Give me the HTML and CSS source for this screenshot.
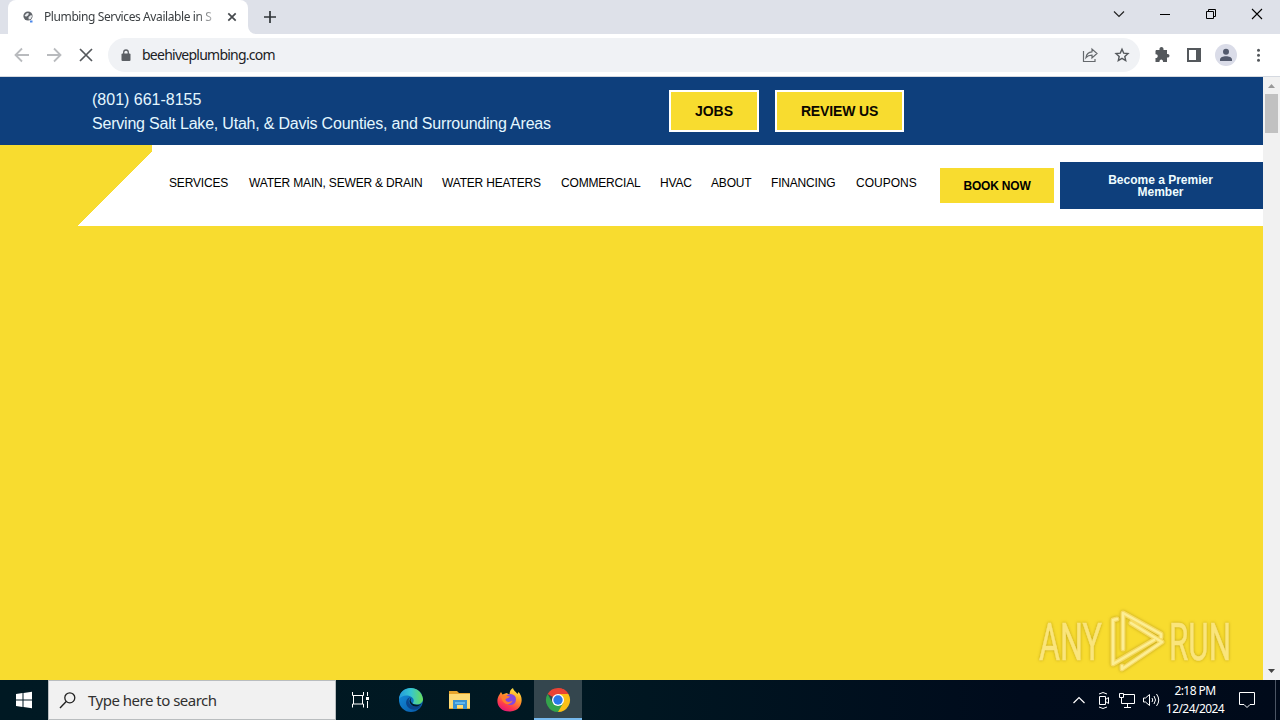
FILE: index.html
```html
<!DOCTYPE html>
<html lang="en">
<head>
<meta charset="utf-8">
<title>Plumbing Services Available in Salt Lake</title>
<link rel="stylesheet" href="styles.css">
</head>
<body>
<div class="screen">
  <header class="tabstrip">
    <div class="tab">
      <svg class="favicon" width="14" height="14" viewBox="0 0 14 14"><circle cx="6" cy="6" r="4.600" fill="#5f6368"/><path d="M2.500 5.500 5 3l2 .5-1 2-2 1.200zM6.500 7l2.500-2 1.200 1-1.500 3-2 .5z" fill="#e8eaed"/><path d="M8 11.500h2.500" stroke="#4a86e8" stroke-width="2"/></svg>
      <span class="tab-title">Plumbing Services Available in S</span>
      <svg class="tab-close" width="10" height="10" viewBox="0 0 10 10"><path d="M1.300 1.300 8.700 8.700M8.700 1.300 1.300 8.700" stroke="#45494d" stroke-width="1.700"/></svg>
    </div>
    <svg class="tab-foot" width="8" height="8" viewBox="0 0 8 8"><path d="M0 0v8h8a8 8 0 0 1-8-8z" fill="#fff"/></svg>
    <svg class="new-tab" width="12" height="12" viewBox="0 0 12 12"><path d="M6 0v12M0 6h12" stroke="#303438" stroke-width="1.700"/></svg>
    <div class="window-controls">
      <svg width="46" height="28" viewBox="0 0 46 28"><path d="m18 11.500 5 5 5-5" fill="none" stroke="#222" stroke-width="1.200"/></svg>
      <svg width="46" height="28" viewBox="0 0 46 28"><path d="M18 14.500h10" stroke="#000"/></svg>
      <svg width="46" height="28" viewBox="0 0 46 28"><path d="M18.500 11.500h7v7h-7zM20.500 11.500v-2h7v7h-2" fill="none" stroke="#000"/></svg>
      <svg width="46" height="28" viewBox="0 0 46 28"><path d="m18 9 10 10M28 9 18 19" stroke="#000" stroke-width="1.100"/></svg>
    </div>
  </header>
  <div class="toolbar">
    <svg width="32" height="32" viewBox="0 0 32 32"><path d="M23 16H10M16 9.500 9.500 16l6.500 6.500" fill="none" stroke="#b9bbbe" stroke-width="1.800"/></svg>
    <svg width="32" height="32" viewBox="0 0 32 32"><path d="M9 16h13M16 9.500l6.500 6.500-6.500 6.500" fill="none" stroke="#b9bbbe" stroke-width="1.800"/></svg>
    <svg width="32" height="32" viewBox="0 0 32 32"><path d="m10 10 12 12M22 10 10 22" stroke="#54585c" stroke-width="1.700"/></svg>
    <div class="omnibox">
      <svg width="10" height="13" viewBox="0 0 10 13"><rect x=".5" y="4.500" width="9" height="7.500" rx="1" fill="#5b5f64"/><path d="M2.700 5V3.300a2.300 2.300 0 0 1 4.600 0V5" fill="none" stroke="#5b5f64" stroke-width="1.300"/></svg>
      <span class="url">beehiveplumbing.com</span>
      <svg class="share" width="32" height="32" viewBox="0 0 32 32"><path d="M9.500 12v10.500H21V20M12 18.500c.5-3.500 2.500-5.500 6-5.700V10l5 4.500-5 4.500v-2.800c-2.700 0-4.500.6-6 2.300z" fill="none" stroke="#65696d" stroke-width="1.200"/></svg>
      <svg width="32" height="32" viewBox="0 0 32 32"><path d="m16 10.200 1.700 3.900 4.300.4-3.200 2.900.9 4.200-3.700-2.200-3.700 2.200.9-4.200-3.200-2.900 4.300-.4z" fill="none" stroke="#54585c" stroke-width="1.400"/></svg>
    </div>
    <div class="actions">
      <svg width="32" height="32" viewBox="0 0 32 32"><path d="M10 11h3.500c-.8-4 4.800-4 4 0H21v4c3.300-.7 3.300 4.200 0 3.500V23h-4c.5-3.500-4-3.500-3.500 0H9.500v-4c3 .3 3-4.300 0-3.800V12z" fill="#54585c"/></svg>
      <svg width="32" height="32" viewBox="0 0 32 32"><path d="M9 9h14v14H9zM11 11v10h7V11z" fill="#54585c" fill-rule="evenodd"/></svg>
      <svg width="32" height="32" viewBox="0 0 32 32"><circle cx="16" cy="16" r="11" fill="#dadce8"/><circle cx="16" cy="12.700" r="3" fill="#535a6d"/><path d="M10 22v-1.500c0-4.500 12-4.500 12 0V22z" fill="#535a6d"/></svg>
      <svg width="32" height="32" viewBox="0 0 32 32"><g fill="#54585c"><circle cx="16.500" cy="11.300" r="1.500"/><circle cx="16.500" cy="16.300" r="1.500"/><circle cx="16.500" cy="21.300" r="1.500"/></g></svg>
    </div>
  </div>
  <div class="viewport">
    <main class="site">
      <div class="topbar">
        <div class="contact"><div class="phone">(801) 661-8155</div><div class="area">Serving Salt Lake, Utah, &amp; Davis Counties, and Surrounding Areas</div></div>
        <a class="cta jobs">JOBS</a>
        <a class="cta review">REVIEW US</a>
      </div>
      <div class="navbar">
        <nav class="menu">
          <a>SERVICES</a><a>WATER MAIN, SEWER &amp; DRAIN</a><a>WATER HEATERS</a><a>COMMERCIAL</a><a>HVAC</a><a>ABOUT</a><a>FINANCING</a><a class="coupons">COUPONS</a>
        </nav>
        <a class="book">BOOK NOW</a>
        <a class="premier">Become a Premier<br>Member</a>
      </div>
      <svg class="watermark" width="204" height="72" viewBox="1034 604 204 72">
        <g class="mark-text"><text x="1039" y="660" textLength="63" lengthAdjust="spacingAndGlyphs">ANY</text><text x="1169" y="660" textLength="62" lengthAdjust="spacingAndGlyphs">RUN</text></g>
        <g class="mark-logo"><path d="M1123 649V613l38 21v3M1117 619l-4 1v44l41-24M1122 666v3l40-27-31-19"/></g>
        <g class="mark-line"><path d="M1123 649V613l38 21v3M1117 619l-4 1v44l41-24M1122 666v3l40-27-31-19"/></g>
      </svg>
    </main>
    <aside class="scrollbar">
      <svg width="17" height="17" viewBox="0 0 17 17"><path d="m5 11 3.500-4 3.500 4z" fill="#999"/></svg>
      <div class="thumb"></div>
      <svg class="down" width="17" height="17" viewBox="0 0 17 17"><path d="m5 6 3.500 4L12 6z" fill="#454545"/></svg>
    </aside>
  </div>
  <footer class="taskbar">
    <svg width="48" height="40" viewBox="0 0 48 40"><path d="m16 14 6.500-1v6.500H16zM23.500 12.900 32 11.700v7.800h-8.500zM16 20.500h6.500V27L16 26zM23.500 20.500H32v7.800l-8.500-1.200z" fill="#fff"/></svg>
    <div class="search">
      <svg width="18" height="18" viewBox="0 0 18 18"><circle cx="10.800" cy="6.800" r="5" fill="none" stroke="#222" stroke-width="1.300"/><path d="M7.200 10.500 1 17" stroke="#222" stroke-width="1.400"/></svg>
      <span>Type here to search</span>
    </div>
    <svg class="task-view" width="51" height="40" viewBox="0 0 51 40"><path d="M16.500 12v3.500h11V12M16.500 27.500V24h11v3.500M17.500 15.500V24M26.500 15.500V24M31.500 12v4M31.500 21v7" fill="none" stroke="#fff"/><path d="M30 17h3v3h-3z" fill="#fff"/></svg>
    <svg class="app" width="48" height="40" viewBox="0 0 48 40">
      <defs><linearGradient id="e1"><stop offset="0" stop-color="#2399dc"/><stop offset=".5" stop-color="#36c6d0"/><stop offset="1" stop-color="#6add58"/></linearGradient><linearGradient id="e2" x2="1" y2="1"><stop stop-color="#1491df"/><stop offset="1" stop-color="#0755a4"/></linearGradient></defs>
      <circle cx="24" cy="20" r="12" fill="url(#e2)"/><path d="M12 19C13 4.500 34 4 36 19c.3 5-6.500 7-10.500 4.500 2-2 1.500-5-1-6.500-5-3-10-1-12.500 2z" fill="url(#e1)"/><path d="M24 17c-4 2-2.800 8 3 9.200 3 .6 6-.2 7.700-1.500C32 30 26 31 22 28c-5-4-3-10 2-11z" fill="#0b458c"/><path d="M25 17.500c-3.500 2.800 0 7.500 5 7.200 2 0 3.700-.5 4.800-1.500-1.500 3-5.700 4-9 2.500-3.800-2-4.500-6.500-.8-8.200z" fill="#011b26"/>
    </svg>
    <svg class="app" width="50" height="40" viewBox="-1 0 50 40"><path d="M13 11h8l2 2h11v16H13z" fill="#e7a52c"/><path d="M13 14h21v14H13z" fill="#fedb75"/><path d="M17 20h14v9h-4v-4h-6v4h-4z" fill="#3a91d1"/><path d="M19 22h10v2H19z" fill="#63b7ec"/></svg>
    <svg class="app" width="49" height="40" viewBox="-1 0 49 40">
      <defs><linearGradient id="f1" x1=".8" y1="0" x2=".3" y2="1"><stop stop-color="#fff24b"/><stop offset=".4" stop-color="#ff9b27"/><stop offset=".75" stop-color="#ff3c4c"/><stop offset="1" stop-color="#e31677"/></linearGradient></defs>
      <path d="M13.500 14.500 15 12l1.500 2.500 4-1.500 3 1.500c0-3.500 1.500-5.500 3.500-6.500.5 3 3 3.500 4.500 6l1-2c6 6 3.500 19-8 19.500-12 .5-16-10-11-17z" fill="url(#f1)"/><circle cx="24.500" cy="19.500" r="5.500" fill="#8547df"/><path d="M15 16c4-2 6 0 9 .5-1 2-4 1.500-4.500 3 0 3 5 3 7 1-1 5-10 6-11.500-4.500z" fill="#ff7e2c"/>
    </svg>
    <div class="app active"><svg width="48" height="38" viewBox="0 0 48 38"><path d="M24 20 13.600 14A12 12 0 0 1 34.400 14z" fill="#e94335"/><path d="M24 20V14h10.400A12 12 0 0 1 24 32z" fill="#fbc016"/><path d="m24 20-5.200 3-5.200-9A12 12 0 0 0 24 32l5.200-9z" fill="#34a34b"/><path d="M24 8a12 12 0 0 1 10.400 6H24z" fill="#e94335"/><circle cx="24" cy="20" r="6" fill="#fff"/><circle cx="24" cy="20" r="4.700" fill="#2878e8"/></svg></div>
    <div class="tray">
      <svg width="24" height="40" viewBox="0 0 24 40"><path d="m6.500 23 5.500-5.500 5.500 5.500" fill="none" stroke="#fff" stroke-width="1.200"/></svg>
      <svg width="24" height="40" viewBox="0 0 24 40"><path d="M8.500 16.500h6v8h-6zM14.500 19.500l3-2v6l-3-2M8 14q4-3 8 0M8 27q4 3 8 0" fill="none" stroke="#fff"/></svg>
      <svg width="24" height="40" viewBox="0 0 24 40"><path d="M9 14.500h10.500v9H6.500V18M12.500 24v3.500M9 27.500h7M4.500 13.500h4v4h-4zM6.500 17.500v4" fill="none" stroke="#fff"/></svg>
      <svg width="24" height="40" viewBox="0 0 24 40"><path d="M4.500 18h2l4-3.500v11L6.500 22h-2zM13 18q1.500 2 0 4M15 16q3 4 0 8M17.500 14q4.500 6 0 12" fill="none" stroke="#fff"/></svg>
      <div class="clock"><div class="time">2:18 PM</div><div class="date">12/24/2024</div></div>
      <svg class="notice" width="24" height="40" viewBox="0 0 24 40"><path d="M4.500 12.500h15v12H15l-3 3-3-3H4.500z" fill="none" stroke="#fff"/></svg>
      <div class="peek"></div>
    </div>
  </footer>
</div>
</body>
</html>
```
FILE: styles.css
```css
* { box-sizing: border-box; }
body { margin: 0; font-family: "Liberation Sans", Arial, sans-serif; }
svg { display: block; flex: none; }
.screen { width: 1280px; height: 720px; display: flex; flex-direction: column; overflow: hidden; background: #fff; }
.tabstrip { height: 34px; flex: none; display: flex; background: #dee1e9; padding-left: 8px; }
.tab { width: 240px; height: 34px; background: #fff; border-radius: 8px 8px 0 0; display: flex; align-items: center; padding-left: 14px; }
.tab-foot { align-self: flex-end; }
.tab-title { width: 172px; margin-left: 8px; overflow: hidden; white-space: nowrap; font: 12px/20px "Noto Sans", sans-serif; letter-spacing: -.4px; color: #3c4043; -webkit-mask-image: linear-gradient(90deg, #000 152px, transparent 178px); mask-image: linear-gradient(90deg, #000 152px, transparent 178px); }
.tab-close { margin-left: 11px; }
.new-tab { margin: 11px 0 0 8px; }
.window-controls { display: flex; margin-left: auto; }
.toolbar { height: 43px; flex: none; display: flex; align-items: center; padding: 0 6px; border-bottom: 1px solid #d5d9e0; }
.omnibox { width: 1032px; height: 34px; margin-left: 6px; border-radius: 17px; background: #f0f2f5; display: flex; align-items: center; padding-left: 13px; padding-right: 2px; }
.url { font: 14px/20px "Noto Sans", sans-serif; letter-spacing: -.75px; margin-left: 11px; color: #202124; }
.share { margin-left: auto; }
.actions { display: flex; margin-left: 6px; }
.viewport { height: 603px; flex: none; display: flex; }
.site { width: 1263px; background: #f8dc2f; display: flex; flex-direction: column; }
.topbar { height: 68px; flex: none; background: #0e3f7c; display: flex; align-items: flex-start; padding: 10px 0 0 92px; }
.contact { width: 577px; padding-top: 1px; font-size: 16px; line-height: 24px; color: #e4f7ff; white-space: nowrap; }
.area { letter-spacing: -.21px; }
.cta { height: 42px; margin-top: 3px; border: 2px solid #fff; background: #f8dc2f; color: #0b0700; font-weight: bold; font-size: 14px; line-height: 38px; text-align: center; }
.jobs { width: 90px; }
.review { width: 129px; margin-left: 16px; letter-spacing: -.15px; }
.navbar { height: 81px; flex: none; display: flex; align-items: flex-start; padding: 17px 0 0 169px; background: linear-gradient(#f8dc2f, #f8dc2f) 0 0 / 78px 81px no-repeat, linear-gradient(#f8dc2f, #f8dc2f) 78px 0 / 74px 7px no-repeat, linear-gradient(to bottom right, #f8dc2f 49.500%, #fff 50%) 78px 7px / 74px 74px no-repeat, #fff; }
.menu { width: 771px; display: grid; grid-template-columns: 80px 193px 119px 99px 51px 60px 85px 61px; padding-top: 12px; font-size: 12px; line-height: 18px; letter-spacing: -.18px; white-space: nowrap; color: #000; }
.coupons { letter-spacing: 0; }
.book { width: 114px; height: 35px; margin: 6px 6px 0 0; background: #f8dc2f; font-weight: bold; font-size: 12px; line-height: 36px; letter-spacing: -.2px; text-align: center; }
.premier { width: 203px; height: 47px; background: #0e3f7c; color: #eefcff; font-weight: bold; font-size: 12px; line-height: 12px; text-align: center; padding: 12px 2px 0 0; }
.watermark { margin: auto 25px 4px auto; filter: drop-shadow(0 0 1.500px rgba(140, 110, 0, .5)); overflow: visible; }
.mark-text { font: 52px "Roboto", sans-serif; fill: #fae57c; stroke: #fae57c; stroke-width: .6; }
.mark-logo { fill: none; stroke: #f6da62; stroke-width: 5; stroke-linejoin: round; stroke-linecap: round; }
.mark-line { fill: none; stroke: #fcee94; stroke-width: 2.500; stroke-linejoin: round; stroke-linecap: round; }
.scrollbar { width: 17px; background: #f1f1f1; display: flex; flex-direction: column; }
.thumb { width: 13px; height: 39px; margin-left: 2px; background: #c1c1c1; }
.down { margin-top: auto; }
.taskbar { height: 40px; flex: none; display: flex; background: linear-gradient(90deg, #001923 0, #001822 45%, #000b1c 80%, #000a1a 100%); }
.search { width: 288px; height: 40px; background: #f1f1f1; border: 1px solid #b9bdbf; display: flex; align-items: center; padding-left: 10px; color: #303030; font: 15px/20px "Noto Sans", sans-serif; letter-spacing: -.5px; }
.search span { margin-left: 11px; }
.app.active { height: 40px; background: #34464e; border-bottom: 2px solid #76b9ed; }
.tray { margin-left: auto; display: flex; }
.clock { width: 66px; color: #fff; font: 12px/18px "Noto Sans", sans-serif; letter-spacing: -.55px; text-align: center; white-space: nowrap; padding: 2px 2px 0 0; }
.notice { margin: 0 16px 0 6px; }
.peek { width: 5px; border-left: 1px solid #4b5564; }
```
